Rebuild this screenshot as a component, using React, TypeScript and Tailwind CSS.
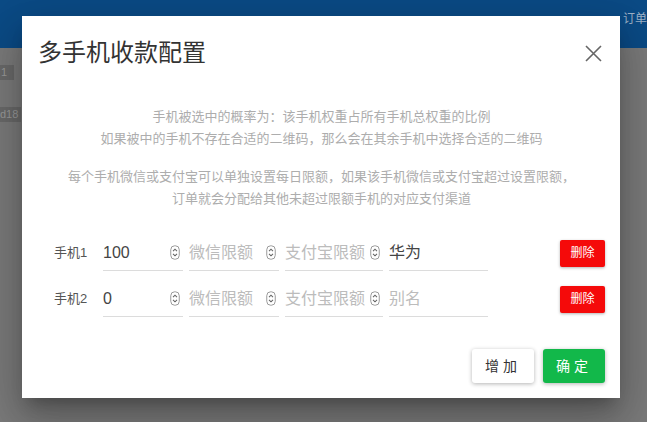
import React from "react";

const FONT = { fontFamily: '"Liberation Sans", "Noto Sans CJK SC", sans-serif' };

function Spinner() {
  return (
    <svg width="10" height="15" viewBox="0 0 10 15" className="shrink-0">
      <rect x="0.75" y="0.75" width="8.5" height="13.5" rx="4" fill="none" stroke="#9a9a9a" strokeWidth="1" />
      <path d="M3 6.2 L5 4.2 L7 6.2" fill="none" stroke="#666" strokeWidth="1.1" />
      <path d="M3 8.8 L5 10.8 L7 8.8" fill="none" stroke="#666" strokeWidth="1.1" />
    </svg>
  );
}

function Field({ width, value, placeholder, spinner }: { width: string; value?: string; placeholder?: string; spinner?: boolean }) {
  return (
    <div className={`${width} flex h-9 items-center border-b border-[#dcdcdc] pr-[3px]`}>
      <span className={`flex-1 truncate text-[16px] ${value ? "text-[#444]" : "text-[#bcbcbc]"}`}>{value ?? placeholder}</span>
      {spinner && <Spinner />}
    </div>
  );
}

type Phone = { label: string; weight: string; alias?: string };

const phones: Phone[] = [
  { label: "手机1", weight: "100", alias: "华为" },
  { label: "手机2", weight: "0" },
];

function PhoneRow({ phone }: { phone: Phone }) {
  return (
    <div className="flex h-9 items-center">
      <span className="w-[49px] text-[13px] text-[#555]">{phone.label}</span>
      <div className="flex gap-[6px]">
        <Field width="w-[80px]" value={phone.weight} spinner />
        <Field width="w-[90px]" placeholder="微信限额" spinner />
        <Field width="w-[98px]" placeholder="支付宝限额" spinner />
        <Field width="w-[99px]" value={phone.alias} placeholder="别名" />
      </div>
      <button className="ml-auto h-[27px] w-[45px] rounded-[2px] bg-[#f50a0a] text-[12px] text-white shadow-[0_1px_3px_rgba(0,0,0,0.3)]">
        删除
      </button>
    </div>
  );
}

export default function App() {
  return (
    <div className="relative h-[422px] w-[647px] overflow-hidden bg-[#7b7b7b]" style={FONT}>
      <div className="flex h-12 justify-end bg-[#0b4b86] pt-[10px]">
        <span className="w-[24px] overflow-hidden whitespace-nowrap text-[12px] text-[#9fb4c9]">订单管理</span>
      </div>
      <div className="flex flex-col items-start gap-[27px] pt-[17px]">
        <span className="flex h-[15px] w-[14px] items-center bg-[#6a6a6a] pl-[1px] text-[11px] text-[#9a9a9a]">1</span>
        <span className="flex h-[15px] w-[21px] items-center bg-[#6a6a6a] text-[11px] text-[#9a9a9a]">d18</span>
      </div>

      <div className="absolute left-[22px] top-[16px] flex h-[382px] w-[598px] flex-col bg-white pb-[15px] pl-4 pr-[15px] pt-5 shadow-[0_11px_15px_-7px_rgba(0,0,0,0.25),0_24px_38px_3px_rgba(0,0,0,0.16),0_9px_46px_8px_rgba(0,0,0,0.14)]">
        <div className="flex h-[34px] items-center">
          <h2 className="text-[24px] text-[#333]">多手机收款配置</h2>
          <svg width="17" height="17" viewBox="0 0 17 17" className="ml-auto mr-[3px]">
            <path d="M1 1 L16 16 M16 1 L1 16" stroke="#666" strokeWidth="1.6" />
          </svg>
        </div>

        <div className="mt-9 flex flex-col items-center text-[13px] leading-[22px] text-[#adadad]">
          <p>手机被选中的概率为：该手机权重占所有手机总权重的比例</p>
          <p>如果被中的手机不存在合适的二维码，那么会在其余手机中选择合适的二维码</p>
          <p className="mt-4">每个手机微信或支付宝可以单独设置每日限额，如果该手机微信或支付宝超过设置限额，</p>
          <p>订单就会分配给其他未超过限额手机的对应支付渠道</p>
        </div>

        <div className="mt-[25px] flex flex-col gap-[10px] pl-4">
          {phones.map((p) => (
            <PhoneRow key={p.label} phone={p} />
          ))}
        </div>

        <div className="mt-auto flex justify-end gap-[9px]">
          <button className="h-[34px] w-[62px] rounded-[3px] bg-white text-[14px] tracking-[4px] text-[#333] shadow-[0_1px_4px_rgba(0,0,0,0.3)]">
            增加
          </button>
          <button className="h-[34px] w-[62px] rounded-[3px] bg-[#12b84a] text-[14px] tracking-[4px] text-white shadow-[0_1px_4px_rgba(0,0,0,0.3)]">
            确定
          </button>
        </div>
      </div>
    </div>
  );
}
